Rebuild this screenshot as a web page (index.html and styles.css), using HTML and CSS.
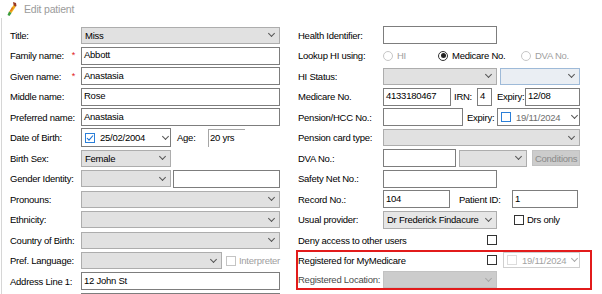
FILE: index.html
```html
<!DOCTYPE html>
<html lang="en">
  <head>
    <meta charset="UTF-8" />
    <title>Edit patient</title>
    <link rel="stylesheet" href="styles.css">
  </head>
  <body>
    <div class="titlebar">
      <svg class="app-icon" width="10" height="14" viewBox="0 0 10 14">
        <path d="M6 0 L9 1 L9.5 4 L7 5.5 Z" fill="#9a3a22" />
        <path d="M6.5 3 L8.5 5 L4.5 11 L2 10 Z" fill="#f2b01e" />
        <path d="M5 5 L6.5 6 L4 9.5 L3 9 Z" fill="#e07818" />
        <path d="M2 9.5 L4.5 11 L2.5 14 L0.5 13 Z" fill="#3b9b3b" />
      </svg>
      <span>Edit patient</span>
    </div>

    <div class="form">
      <!-- left column: personal details -->
      <div class="col left">
        <span class="label">Title:</span>
        <div class="combo">Miss<i class="chev"></i></div>

        <span class="label">Family name:<b class="req">*</b></span>
        <div class="box">Abbott</div>

        <span class="label">Given name:<b class="req">*</b></span>
        <div class="box">Anastasia</div>

        <span class="label">Middle name:</span>
        <div class="box">Rose</div>

        <span class="label">Preferred name:</span>
        <div class="box">Anastasia</div>

        <span class="label">Date of Birth:</span>
        <div class="field">
          <div class="box date dob">
            <span class="check blue">
              <svg width="8" height="8" viewBox="0 0 8 8"><polyline points="1,4 3,6.2 7,1.5" fill="none" stroke="#1a6fd0" stroke-width="1.1" /></svg>
            </span>
            <span class="date-text">25/02/2004</span>
            <i class="chev"></i>
          </div>
          <span class="age-label">Age:</span>
          <div class="age">20 yrs</div>
        </div>

        <span class="label">Birth Sex:</span>
        <div class="field">
          <div class="combo w90">Female<i class="chev"></i></div>
        </div>

        <span class="label">Gender Identity:</span>
        <div class="field">
          <div class="combo w90"><i class="chev"></i></div>
          <div class="box gender-other"></div>
        </div>

        <span class="label">Pronouns:</span>
        <div class="combo"><i class="chev"></i></div>

        <span class="label">Ethnicity:</span>
        <div class="combo"><i class="chev"></i></div>

        <span class="label">Country of Birth:</span>
        <div class="combo"><i class="chev"></i></div>

        <span class="label">Pref. Language:</span>
        <div class="field">
          <div class="combo w141"><i class="chev"></i></div>
          <span class="check disabled interp"></span>
          <span class="dim">Interpreter</span>
        </div>

        <span class="label">Address Line 1:</span>
        <div class="box">12 John St</div>

        <span class="label"></span>
        <div class="box cut"></div>
      </div>

      <!-- right column: identifiers -->
      <div class="col right">
        <span class="label">Health Identifier:</span>
        <div class="field"><div class="box w114"></div></div>

        <span class="label">Lookup HI using:</span>
        <div class="field">
          <span class="opt opt-hi"><i class="radio disabled"></i><span class="dim">HI</span></span>
          <span class="opt opt-medicare"><i class="radio on"></i>Medicare No.</span>
          <span class="opt"><i class="radio disabled"></i><span class="dim">DVA No.</span></span>
        </div>

        <span class="label">HI Status:</span>
        <div class="field">
          <div class="combo w114"><i class="chev"></i></div>
          <div class="combo focus w80"><i class="chev"></i></div>
        </div>

        <span class="label">Medicare No.</span>
        <div class="field">
          <div class="box w68">4133180467</div>
          <span class="irn-label">IRN:</span>
          <div class="box w15">4</div>
          <span class="expiry-label">Expiry:</span>
          <div class="box w55">12/08</div>
        </div>

        <span class="label">Pension/HCC No.:</span>
        <div class="field">
          <div class="box w80"></div>
          <span class="expiry-label pension">Expiry:</span>
          <div class="box date w83">
            <span class="check blue"></span>
            <span class="date-text grey">19/11/2024</span>
            <i class="chev"></i>
          </div>
        </div>

        <span class="label">Pension card type:</span>
        <div class="combo"><i class="chev"></i></div>

        <span class="label">DVA No.:</span>
        <div class="field">
          <div class="box w73"></div>
          <div class="combo w69 dva-combo"><i class="chev"></i></div>
          <span class="btn">Conditions</span>
        </div>

        <span class="label">Safety Net No.:</span>
        <div class="field"><div class="box w114"></div></div>

        <span class="label">Record No.:</span>
        <div class="field">
          <div class="box w67">104</div>
          <span class="pid-label">Patient ID:</span>
          <div class="box w66">1</div>
        </div>

        <span class="label">Usual provider:</span>
        <div class="field">
          <div class="combo provider w114">Dr Frederick Findacure<i class="chev"></i></div>
          <span class="check drs"></span>
          <span class="drs-text">Drs only</span>
        </div>

        <div class="deny">
          <span>Deny access to other users</span>
          <span class="check"></span>
        </div>

        <div class="highlight">
          <div class="mymedicare">
            <span>Registered for MyMedicare</span>
            <span class="check push"></span>
            <div class="box date off w77">
              <span class="check pale"></span>
              <span class="date-text">19/11/2024</span>
              <i class="chev light"></i>
            </div>
          </div>
          <span class="label muted">Registered Location:</span>
          <div class="field">
            <div class="combo off w114"><i class="chev light"></i></div>
          </div>
        </div>
      </div>
    </div>
  </body>
</html>
```

FILE: styles.css
```css
html {
  overflow: hidden;
}

body {
  margin: 0;
  height: 294px;
  overflow: hidden;
  background-color: #fff;
  color: #000;
  font-family: "Liberation Sans", Arial, sans-serif;
  font-size: 9.5px;
  letter-spacing: -0.25px;
}

.titlebar {
  height: 18px;
  display: flex;
  align-items: center;
  gap: 7px;
  padding-left: 7px;
  color: #9b9b9b;
  font-size: 10.5px;
  letter-spacing: -0.2px;
}

.form {
  display: flex;
  height: 268px;
  margin-left: 1px;
  padding-top: 8px;
  border-left: 1px solid #d6d6d6;
}

.col {
  display: grid;
  grid-auto-rows: 18px;
  row-gap: 2.5px;
  align-items: center;
  align-content: start;
}

.left {
  margin-left: 8px;
  grid-template-columns: 71px 199px;
}

.right {
  margin-left: 16px;
  grid-template-columns: 87px 197px;
}

.right > .label {
  padding-left: 2px;
}

.label {
  display: flex;
  white-space: nowrap;
}

.req {
  margin-left: auto;
  margin-right: 6px;
  color: #e02020;
  font-weight: normal;
  font-size: 9px;
}

.field {
  display: flex;
  align-items: center;
  white-space: nowrap;
}

.box {
  box-sizing: border-box;
  height: 18px;
  display: flex;
  align-items: center;
  padding: 0 2px 2px;
  background-color: #fff;
  border: 1px solid #7d7d7d;
  white-space: nowrap;
}

/* only the top edge of the next address line shows */
.box.cut {
  align-self: start;
  height: 2px;
  border-bottom: none;
}

.combo {
  box-sizing: border-box;
  height: 17px;
  display: flex;
  align-items: center;
  padding: 0 3px;
  background-color: #e1e1e1;
  border: 1px solid #adadad;
  white-space: nowrap;
}

.combo.focus {
  margin-left: 3px;
  background-color: #eaeef3;
  border-color: #9ebad8;
}

.combo.provider {
  height: 18px;
  background-color: #e6e6e6;
}

.combo.off {
  background-color: #cccccc;
  border-color: #c2c2c2;
}

.chev {
  width: 4px;
  height: 4px;
  margin: -3px 2px 0 auto;
  border-right: 1px solid #555;
  border-bottom: 1px solid #555;
  transform: rotate(45deg);
}

.chev.light {
  border-color: #a8a8a8;
}

.w15 { width: 15px; }
.w55 { width: 55px; }
.w66 { width: 66px; }
.w67 { width: 67px; }
.w68 { width: 68px; }
.w69 { width: 69px; }
.w73 { width: 73px; }
.w77 { width: 77px; }
.w80 { width: 80px; }
.w83 { width: 83px; }
.w90 { width: 90px; }
.w114 { width: 114px; }
.w141 { width: 141px; }

/* date pickers */
.date {
  padding: 0 0 0 3px;
}

.dob {
  width: 90px;
  height: 19px;
}

.date-text {
  margin-left: 5px;
}

.date-text.grey {
  color: #6e6e6e;
}

.date.off {
  margin-left: 6px;
  height: 16px;
  border-color: #cfcfcf;
  color: #a3a3a3;
}

.check {
  box-sizing: border-box;
  width: 10px;
  height: 10px;
  display: inline-flex;
  align-items: center;
  justify-content: center;
  flex-shrink: 0;
  background-color: #fff;
  border: 1px solid #333;
}

.check.blue {
  border-color: #2b7fd8;
}

.check.disabled {
  border-color: #c4c4c4;
}

.check.pale {
  border-color: #dcdcdc;
}

.age-label {
  width: 31px;
  margin-left: 6px;
}

.age {
  box-sizing: border-box;
  width: 37px;
  height: 18px;
  padding: 2px 0 0 1px;
  border-top: 1px solid #a6a6a6;
  border-left: 1px solid #a6a6a6;
}

.gender-other {
  flex: 1;
  margin-left: 2px;
}

.interp {
  margin-left: 4px;
}

.dim {
  margin-left: 3px;
  color: #a0a0a0;
}

/* radios */
.opt {
  display: flex;
  align-items: center;
}

.opt .dim {
  margin-left: 4px;
}

.opt-hi {
  width: 55px;
}

.opt-medicare {
  width: 83px;
  gap: 4px;
}

.radio {
  box-sizing: border-box;
  width: 10px;
  height: 10px;
  display: flex;
  align-items: center;
  justify-content: center;
  border: 1px solid #333;
  border-radius: 50%;
  background-color: #fff;
}

.radio.on::after {
  content: "";
  width: 5px;
  height: 5px;
  border-radius: 50%;
  background-color: #222;
}

.radio.disabled {
  border-color: #c6c6c6;
}

.irn-label {
  width: 23px;
  margin-left: 3px;
}

.expiry-label {
  width: 28px;
  margin-left: 5px;
}

.expiry-label.pension {
  width: 30px;
  margin-left: 4px;
}

.dva-combo {
  margin-left: 3px;
}

.btn {
  box-sizing: border-box;
  width: 48px;
  height: 16px;
  margin-left: 5px;
  display: flex;
  align-items: center;
  justify-content: center;
  background-color: #cccccc;
  border: 1px solid #c2c2c2;
  color: #8a8a8a;
}

.pid-label {
  width: 53px;
  margin-left: 9px;
}

.drs {
  margin-left: 17px;
}

.drs-text {
  margin-left: 3px;
}

.deny {
  grid-column: 1 / -1;
  width: 199px;
  padding-left: 2px;
  display: flex;
  align-items: center;
  justify-content: space-between;
  white-space: nowrap;
}

.highlight {
  grid-column: 1 / -1;
  grid-row: span 2;
  align-self: stretch;
  margin: -1.5px -12px 0 0;
  display: grid;
  grid-template-columns: 85px 1fr;
  grid-template-rows: 16px 17px;
  row-gap: 3px;
  align-items: center;
  border: 2px solid #e21b1b;
}

.mymedicare {
  grid-column: 1 / -1;
  display: flex;
  align-items: center;
  padding-right: 10px;
  white-space: nowrap;
}

.push {
  margin-left: auto;
}

.muted {
  color: #4a4a4a;
}
```
